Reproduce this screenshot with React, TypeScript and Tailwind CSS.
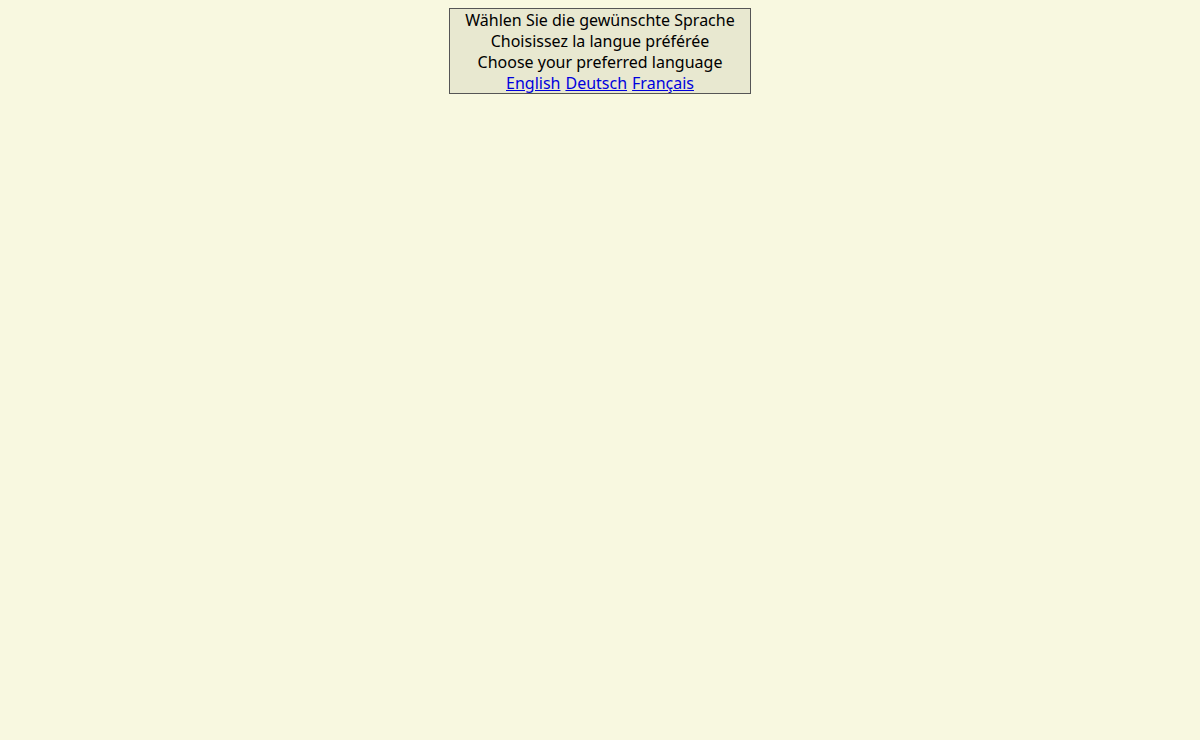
type Language = {
    code: string;
    label: string;
};

const prompts: Language[] = [
    {code: "de", label: "Wählen Sie die gewünschte Sprache"},
    {code: "fr", label: "Choisissez la langue préférée"},
    {code: "en", label: "Choose your preferred language"},
];

const languages: Language[] = [
    {code: "en", label: "English"},
    {code: "de", label: "Deutsch"},
    {code: "fr", label: "Français"},
];

function App()
{
    return (
        <div className="min-h-screen bg-[#f8f8e0] p-2 font-['Noto_Sans',sans-serif] text-base leading-[21px] text-black">
            <main className="mx-auto w-full max-w-[302px] border border-[#555555] bg-[#e8e8d0] pt-px text-center">
                {prompts.map((prompt) => (
                    <p key={prompt.code} lang={prompt.code}>{prompt.label}</p>
                ))}

                <nav className="flex flex-wrap justify-center gap-x-[5px] leading-5">
                    {languages.map((language) => (
                        <a
                            key={language.code}
                            href={`#${language.code}`}
                            lang={language.code}
                            className="text-[#0000dd] underline"
                        >
                            {language.label}
                        </a>
                    ))}
                </nav>
            </main>
        </div>
    );
}

export default App;
